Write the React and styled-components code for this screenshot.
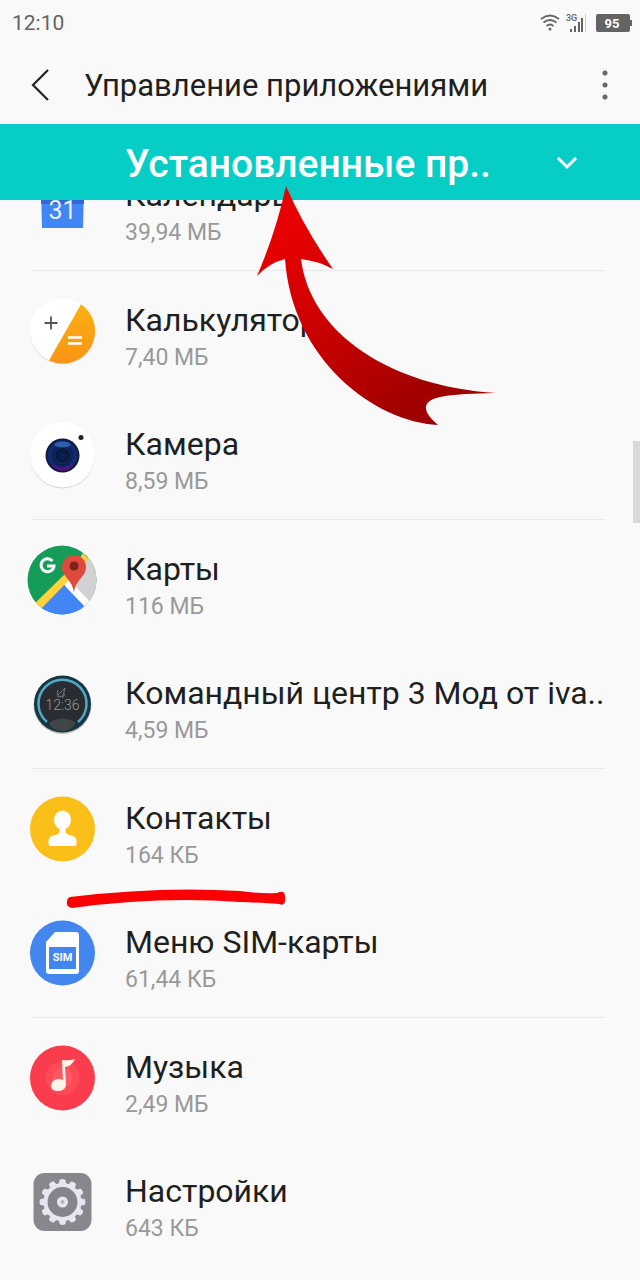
import React from 'react';
import styled, { createGlobalStyle } from 'styled-components';

const GlobalStyle = createGlobalStyle`
  * { box-sizing: border-box; }
  body {
    margin: 0;
    background: #f9f9f9;
    color: #1e1f21;
    font-family: Roboto, "Noto Sans", sans-serif;
  }
  button, select { font: inherit; color: inherit; }
`;

const Screen = styled.div`
  position: relative;
  display: flex;
  flex-direction: column;
  min-height: 100vh;
  overflow: hidden;
`;

const StatusBar = styled.div`
  display: flex;
  align-items: center;
  justify-content: space-between;
  height: 46px;
  padding: 0 8px 0 12px;
  font-size: 21px;
  line-height: 24px;
  color: #646464;
`;

const StatusIcons = styled.div`
  display: flex;
  align-items: center;
  gap: 6px;
`;

const TitleBar = styled.header`
  display: flex;
  align-items: center;
  height: 78px;
  padding: 0 15px 0 20px;
`;

const IconButton = styled.button`
  display: flex;
  align-items: center;
  justify-content: center;
  width: 40px;
  height: 48px;
  padding: 0;
  border: 0;
  background: none;
`;

const Title = styled.h1`
  flex: 1;
  margin: 0;
  padding: 2px 0 0 24px;
  font-size: 31px;
  line-height: 36px;
  font-weight: 400;
`;

const Filter = styled.label`
  position: relative;
  z-index: 1;
  display: flex;
  align-items: center;
  height: 76px;
  background: #06cec6;
  color: #fff;
`;

const FilterSelect = styled.select`
  appearance: none;
  width: 100%;
  height: 76px;
  padding: 4px 60px 0 125px;
  border: 0;
  border-radius: 0;
  background: none;
  font-size: 39px;
  font-weight: 500;
  color: #fff;
`;

const FilterArrow = styled.svg`
  position: absolute;
  right: 60px;
  pointer-events: none;
`;

const Viewport = styled.main`
  position: relative;
  flex: 1;
  overflow: hidden;
`;

const AppList = styled.ul`
  list-style: none;
  margin: -54px 0 0;
  padding: 0;
`;

const AppItem = styled.li`
  &:nth-child(odd)::after {
    content: "";
    display: block;
    height: 1px;
    margin: 0 34px 0 32px;
    background: #e9e9e9;
  }
  &:last-child::after { display: none; }
`;

const AppRow = styled.button`
  display: flex;
  align-items: center;
  gap: 28px;
  width: 100%;
  height: 124px;
  padding: 0 34px 4px 27px;
  border: 0;
  background: none;
  text-align: left;
`;

const AppIcon = styled.svg`
  flex: none;
  width: 70px;
  height: 70px;
`;

const AppText = styled.span`
  display: flex;
  flex-direction: column;
  flex: 1;
  min-width: 0;
  padding-top: 14px;
`;

const AppName = styled.span`
  font-size: 32px;
  line-height: 40px;
  white-space: nowrap;
`;

const AppSize = styled.span`
  font-size: 23px;
  line-height: 36px;
  color: #999;
`;

const ScrollThumb = styled.div`
  position: absolute;
  top: 241px;
  right: 0;
  width: 7px;
  height: 82px;
  background: #d9d9d9;
`;

const Markup = styled.svg`
  position: absolute;
  top: 0;
  left: 0;
  z-index: 2;
  width: 640px;
  height: 920px;
  pointer-events: none;
`;

const CalendarIcon = () => (
  <AppIcon viewBox="0 0 70 70" aria-hidden="true">
    <path d="M14 15h43l-1 42H15z" fill="#4285f4" />
    <path d="M14 15h43v18H14z" fill="#3367d6" />
    <text x="35.500" y="48" fontSize="25" textAnchor="middle" fill="#e8f0ff">31</text>
  </AppIcon>
);

const CalculatorIcon = () => (
  <AppIcon viewBox="0 0 70 70" aria-hidden="true">
    <defs>
      <linearGradient id="calc" x1="0" y1="0" x2="0" y2="1">
        <stop offset="0" stopColor="#fbb014" />
        <stop offset="1" stopColor="#fa9414" />
      </linearGradient>
    </defs>
    <circle cx="35.500" cy="36" r="32.500" fill="#d8d8d8" />
    <circle cx="35.500" cy="35" r="32.500" fill="#fff" />
    <path d="M54 8.300A32.500 32.500 0 0 1 22 64.600z" fill="url(#calc)" />
    <path d="M24 20.500v13M17.500 27h13" stroke="#555" strokeWidth="1.800" />
    <path d="M41 41.500h14M41 47.500h14" stroke="#fff" strokeWidth="2.500" />
  </AppIcon>
);

const CameraIcon = () => (
  <AppIcon viewBox="0 0 70 70" aria-hidden="true">
    <defs>
      <radialGradient id="lens">
        <stop offset="0" stopColor="#0c2250" />
        <stop offset=".45" stopColor="#09163e" />
        <stop offset=".75" stopColor="#10307c" />
        <stop offset="1" stopColor="#10142f" />
      </radialGradient>
    </defs>
    <circle cx="35.500" cy="36" r="32.500" fill="#d8d8d8" />
    <circle cx="35.500" cy="35" r="32.500" fill="#fff" />
    <circle cx="35.500" cy="35.500" r="17" fill="url(#lens)" />
    <ellipse cx="35.500" cy="24.500" rx="8" ry="3" fill="#2c5fae" />
    <path d="M24 43q11 9 23 0-3 7-11.500 8Q27 50 24 43z" fill="#55127f" />
    <circle cx="35.500" cy="35.500" r="8" fill="none" stroke="#16396a" />
    <circle cx="54" cy="17.500" r="2.500" fill="#222" />
  </AppIcon>
);

const MapsIcon = () => (
  <AppIcon viewBox="0 0 70 70" aria-hidden="true">
    <clipPath id="mapDisc"><circle cx="35" cy="35" r="34.500" /></clipPath>
    <g clipPath="url(#mapDisc)">
      <path d="M0 0h70v70H0z" fill="#159c58" />
      <path d="M62 12 70 5v65L36 36z" fill="#d2d1d3" />
      <path d="m50 18 6-10 6 6-12 13z" fill="#ffce43" />
      <path d="M35 37 40 32 64 58 58 66z" fill="#fff" />
      <path d="M8 66 35 38 62 66 50 72H14z" fill="#4285f4" />
      <path d="M5 61 38 29l5 5L12 66z" fill="#fdd13f" />
    </g>
    <path d="M47 48c-1-13-12-16-12-26a12 12 0 0 1 24 0c0 10-11 13-12 26z" fill="#dc4b3e" />
    <circle cx="47" cy="21" r="4.500" fill="#7b231c" />
    <path d="M25.500 16a6.500 6.500 0 1 0 1.500 5H20" fill="none" stroke="#fff" strokeWidth="3" />
  </AppIcon>
);

const CommandIcon = () => (
  <AppIcon viewBox="0 0 70 70" aria-hidden="true">
    <circle cx="35.500" cy="36" r="29" fill="#bbb" />
    <circle cx="35.500" cy="35" r="28.500" fill="#183641" />
    <circle cx="35.500" cy="35" r="24" fill="#292c30" />
    <path d="M20 53a24 24 0 1 1 31 0" fill="none" stroke="#54a9c7" strokeWidth="2.500" />
    <path d="M22 54q13-9 27 0-5 8-14 8t-13-8z" fill="#414546" />
    <path d="m31 26 7-7-2 8-5 1zm0-5-1 5m8-1-3 4" fill="none" stroke="#777" />
    <text x="35.500" y="41" fontSize="14" fontWeight="300" textAnchor="middle" fill="#9a9a9a">12:36</text>
  </AppIcon>
);

const ContactsIcon = () => (
  <AppIcon viewBox="0 0 70 70" aria-hidden="true">
    <circle cx="35.500" cy="35" r="32.500" fill="#fabf18" />
    <ellipse cx="35.500" cy="26" rx="8.500" ry="9.500" fill="#fff" />
    <path d="M32.500 33h6v4q0 3 4 4 7 1 7 6v3q0 2-2 2h-24q-2 0-2-2v-3q0-5 7-6 4-1 4-4z" fill="#fff" />
  </AppIcon>
);

const SimIcon = () => (
  <AppIcon viewBox="0 0 70 70" aria-hidden="true">
    <circle cx="35.500" cy="35" r="32.500" fill="#4386ee" />
    <path d="M28 14h21q3 0 3 3v36q0 3-3 3H22q-3 0-3-3V24z" fill="#fff" />
    <path d="M22 29h27v22H22z" fill="#4386ee" />
    <text x="35.500" y="43" fontSize="11" fontWeight="700" textAnchor="middle" fill="#fff">SIM</text>
  </AppIcon>
);

const MusicIcon = () => (
  <AppIcon viewBox="0 0 70 70" aria-hidden="true">
    <circle cx="35.500" cy="35" r="32.500" fill="#fa3c4c" />
    <circle cx="35.500" cy="35" r="17" fill="#fc4a56" />
    <circle cx="35.500" cy="35" r="10" fill="#fc5a63" />
    <path d="M35 17q7 1 13-1-3 7-10 8l1 17q0 7-8 7-7 0-7-5 0-6 7-7 3 0 5 1z" fill="#fff4ea" />
  </AppIcon>
);

const TEETH = Array.from({ length: 12 }, (_, i) => i * 30);

const SettingsIcon = () => (
  <AppIcon viewBox="0 0 70 70" aria-hidden="true">
    <rect x="6.500" y="6" width="58" height="58" rx="11" fill="#88878e" />
    <g fill="#e6e6f1">
      {TEETH.map((angle) => (
        <path key={angle} d="M32.500 13q3-2 6 0l1 7h-8z" transform={`rotate(${angle} 35.500 35)`} />
      ))}
    </g>
    <circle cx="35.500" cy="35" r="17" fill="#85848c" stroke="#e6e6f1" strokeWidth="4" />
    <circle cx="35.500" cy="35" r="5.500" fill="#e6e6f1" />
    <circle cx="35.500" cy="35" r="2" fill="#b5b5c0" />
  </AppIcon>
);

const APPS = [
  { name: 'Календарь', size: '39,94 МБ', Icon: CalendarIcon },
  { name: 'Калькулятор', size: '7,40 МБ', Icon: CalculatorIcon },
  { name: 'Камера', size: '8,59 МБ', Icon: CameraIcon },
  { name: 'Карты', size: '116 МБ', Icon: MapsIcon },
  { name: 'Командный центр 3 Мод от iva..', size: '4,59 МБ', Icon: CommandIcon },
  { name: 'Контакты', size: '164 КБ', Icon: ContactsIcon },
  { name: 'Меню SIM-карты', size: '61,44 КБ', Icon: SimIcon },
  { name: 'Музыка', size: '2,49 МБ', Icon: MusicIcon },
  { name: 'Настройки', size: '643 КБ', Icon: SettingsIcon },
];

const WifiIcon = () => (
  <svg width="20" height="18" viewBox="0 0 20 18" fill="none" stroke="#646464" strokeWidth="1.800" aria-hidden="true">
    <path d="M1 5q9-7 18 0M3.500 8.500q6.500-5 13 0M6.500 12q3.500-3 7 0" />
    <circle cx="10" cy="15" r="1.500" fill="#646464" stroke="none" />
  </svg>
);

const SignalIcon = () => (
  <svg width="24" height="20" viewBox="0 0 24 20" aria-hidden="true">
    <path d="M4 16h2v3H4zM8 13h2v6H8zM12 9h2v10h-2zM15 5h2v14h-2z" fill="#646464" />
    <path d="M19 1h1v18h-1z" fill="#ccc" />
    <text x="0" y="8" fontSize="9" fontWeight="500" fill="#646464">3G</text>
  </svg>
);

const BatteryIcon = () => (
  <svg width="36" height="18" viewBox="0 0 36 18" aria-hidden="true">
    <rect width="34" height="18" rx="2" fill="#646464" />
    <path d="M34 6h2v6h-2z" fill="#646464" />
    <text x="16" y="14" fontSize="13" fontWeight="700" textAnchor="middle" fill="#fff">95</text>
  </svg>
);

const Annotations = () => (
  <Markup viewBox="0 0 640 920" aria-hidden="true">
    <defs>
      <linearGradient id="arrowRed" gradientUnits="userSpaceOnUse" x1="280" y1="240" x2="410" y2="410">
        <stop offset="0" stopColor="#e70000" />
        <stop offset=".5" stopColor="#c60000" />
        <stop offset="1" stopColor="#9f0000" />
      </linearGradient>
    </defs>
    <path
      d="M286 186Q303 226 333 269Q318 261 301 259C310 332 388 386 496 393C450 394 427 396 426 407Q425 414 438 425C375 422 292 360 285 259Q269 263 257 276Q276 232 286 186Z"
      fill="url(#arrowRed)"
    />
    <path
      d="M70 897Q160 886 240 891Q262 894 277 893Q285 889 285 897Q286 907 279 904Q265 903 240 902Q160 896 72 908Q66 907 67 902Q67 898 70 897Z"
      fill="#fa0004"
    />
  </Markup>
);

export default function App() {
  return (
    <Screen>
      <GlobalStyle />
      <StatusBar>
        <span>12:10</span>
        <StatusIcons>
          <WifiIcon />
          <SignalIcon />
          <BatteryIcon />
        </StatusIcons>
      </StatusBar>
      <TitleBar>
        <IconButton aria-label="Назад">
          <svg width="20" height="32" viewBox="0 0 20 32" fill="none" stroke="#222" strokeWidth="2.200">
            <path d="M18 1 3 16l15 15" />
          </svg>
        </IconButton>
        <Title>Управление приложениями</Title>
        <IconButton aria-label="Ещё">
          <svg width="6" height="30" viewBox="0 0 6 30" fill="#666">
            <circle cx="3" cy="3" r="2.500" />
            <circle cx="3" cy="15" r="2.500" />
            <circle cx="3" cy="27" r="2.500" />
          </svg>
        </IconButton>
      </TitleBar>
      <Filter>
        <FilterSelect aria-label="Фильтр приложений">
          <option>Установленные пр..</option>
        </FilterSelect>
        <FilterArrow width="26" height="16" viewBox="0 0 26 16" fill="none" stroke="#fff" strokeWidth="3">
          <path d="m4 4 9 9 9-9" />
        </FilterArrow>
      </Filter>
      <Viewport>
        <AppList>
          {APPS.map(({ name, size, Icon }) => (
            <AppItem key={name}>
              <AppRow>
                <Icon />
                <AppText>
                  <AppName>{name}</AppName>
                  <AppSize>{size}</AppSize>
                </AppText>
              </AppRow>
            </AppItem>
          ))}
        </AppList>
        <ScrollThumb />
      </Viewport>
      <Annotations />
    </Screen>
  );
}
